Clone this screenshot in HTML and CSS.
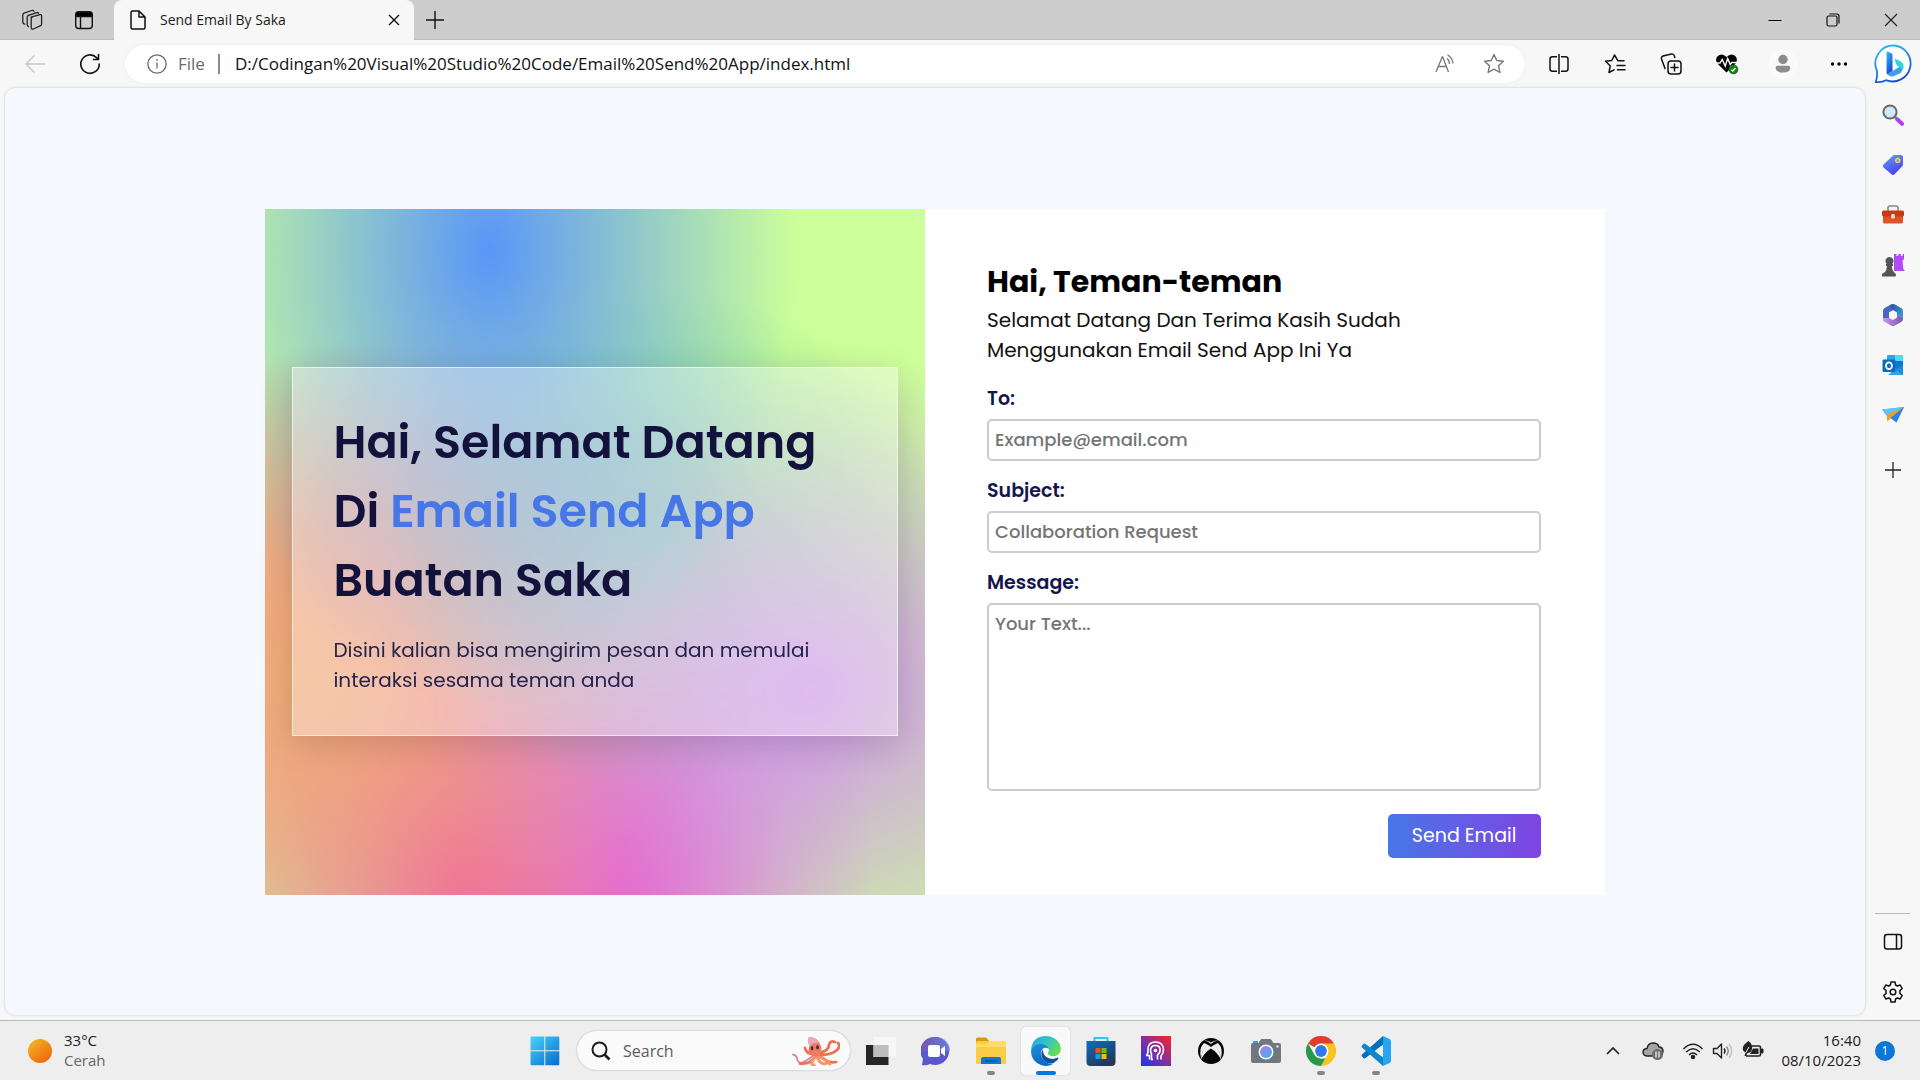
FILE: index.html
```html
<!DOCTYPE html>
<html lang="id">
<head>
<meta charset="utf-8">
<meta name="viewport" content="width=device-width, initial-scale=1">
<title>Send Email By Saka</title>
<link rel="stylesheet" href="styles.css">
</head>
<body>
<div class="titlebar">
  <button class="title-btn" aria-label="Workspaces"><svg width="22" height="22" viewBox="0 0 22 22" fill="none" stroke="#222" stroke-width="1.3" stroke-linejoin="round" stroke-linecap="round"><path d="M10 8.2 19 5.6q1.6-.3 1.6 1.300v8.300q0 1-1 1.400L12.400 20q-1.600.5-2.200-1V9.800q0-1.100 1-1.600zM7.500 17.500q-1.300-.3-1.300-1.700V8q0-1.200 1.200-1.700l8.200-2.700q1.400-.4 2 .7M3.800 15.200q-2-.4-2-2V6q0-1.300 1.200-1.800l7.800-2.700q1.700-.5 2.200.9"/></svg></button>
  <button class="title-btn" aria-label="Tab actions"><svg width="20" height="20" viewBox="0 0 20 20" fill="none" stroke="#111" stroke-width="1.400"><rect x="1.700" y="2" width="16.600" height="16.500" rx="3"/><path d="M6.500 6v12"/><path d="M2 6.500V4.500Q2 2 4.500 2h11Q18 2 18 4.500v2z" fill="#000"/></svg></button>
  <div class="tab">
    <svg width="18" height="22" viewBox="0 0 18 22" fill="none" stroke="#111" stroke-width="1.500" stroke-linejoin="round"><path d="M3.500 2H10l6 6v10.500q0 1.500-1.500 1.500h-11Q2 20 2 18.500v-15Q2 2 3.500 2zM10 2v6h6"/></svg>
    <span class="tab-title">Send Email By Saka</span>
    <button class="tab-close" aria-label="Close tab"><svg width="12" height="12" viewBox="0 0 12 12" stroke="#111" stroke-width="1.400"><path d="m1 1 10 10M11 1 1 11"/></svg></button>
  </div>
  <button class="new-tab" aria-label="New tab"><svg width="18" height="18" viewBox="0 0 18 18" stroke="#111" stroke-width="1.400"><path d="M9 0v18M0 9h18"/></svg></button>
  <div class="window-controls">
    <button aria-label="Minimize"><svg width="14" height="14" viewBox="0 0 14 14" stroke="#000"><path d="M.5 7.500h13"/></svg></button>
    <button aria-label="Restore"><svg width="14" height="14" viewBox="0 0 14 14" fill="none" stroke="#111" stroke-width="1.200"><rect x="1" y="3" width="10" height="10" rx="1.500"/><path d="M3.500 1h7.300q2.200 0 2.200 2.200v7.300"/></svg></button>
    <button aria-label="Close"><svg width="14" height="14" viewBox="0 0 14 14" stroke="#222" stroke-width="1.200"><path d="m1 1 12 12M13 1 1 13"/></svg></button>
  </div>
</div>

<div class="toolbar">
  <button class="tool" aria-label="Back"><svg width="22" height="20" viewBox="0 0 22 20" fill="none" stroke="#c8c8c8" stroke-width="1.400"><path d="M21 10H2M10.500 1.500 2 10l8.500 8.500"/></svg></button>
  <button class="tool narrow" aria-label="Refresh"><svg width="22" height="22" viewBox="0 0 22 22" fill="none" stroke="#111" stroke-width="1.600" stroke-linecap="round" stroke-linejoin="round"><path d="M20.200 11a9.200 9.200 0 1 1-2.500-6.200L19.500 6.500M19.500 1.500v5h-5"/></svg></button>
  <div class="address">
    <svg width="20" height="20" viewBox="0 0 20 20" fill="none" stroke="#6b6b6b" stroke-width="1.300"><circle cx="10" cy="10" r="9.200"/><path d="M10 8.500v6"/><path d="M10 5.300v1.500" stroke-width="1.600"/></svg>
    <span class="scheme">File</span>
    <input class="url" type="text" aria-label="Address" value="D:/Codingan%20Visual%20Studio%20Code/Email%20Send%20App/index.html">
    <button class="addr-btn" aria-label="Read aloud"><svg width="20" height="20" viewBox="0 0 20 20" fill="none" stroke="#777" stroke-width="1.300"><path d="M1 18 7.200 3h.5l5.800 15M3.200 12.500h8.300M12 4.500q2.700 2 2.500 5.500M12.500.8q5 3.200 5.500 8.700"/></svg></button>
    <button class="addr-btn" aria-label="Add to favorites"><svg width="22" height="22" viewBox="0 0 22 22" fill="none" stroke="#777" stroke-width="1.400" stroke-linejoin="round"><path d="m11 1.500 2.800 6 6.600.8-4.900 4.500 1.400 6.700L11 16.200l-5.900 3.300 1.400-6.700L1.600 8.300l6.600-.8z"/></svg></button>
  </div>
  <button class="tool" aria-label="Split screen"><svg width="20" height="20" viewBox="0 0 20 20" fill="none" stroke="#111" stroke-width="1.500"><path d="M8 2.700H3.500Q1 2.700 1 5.200v9.600q0 2.500 2.500 2.500H8M12 2.700h4.500Q19 2.700 19 5.200v9.600q0 2.500-2.500 2.500H12M10 0v20"/></svg></button>
  <button class="tool" aria-label="Favorites"><svg width="22" height="20" viewBox="0 0 22 20" fill="none" stroke="#111" stroke-width="1.500" stroke-linejoin="round" stroke-linecap="round"><path d="M20 6.700h-6.200L10.500 1 7.800 6.500 1.500 7.300l4.700 4.500L5 18.500l5-2.600M13 11.500h8M13.500 15.800H21"/></svg></button>
  <button class="tool" aria-label="Collections"><svg width="22" height="22" viewBox="0 0 22 22" fill="none" stroke="#111" stroke-width="1.500" stroke-linecap="round"><rect x="8" y="8" width="13" height="13" rx="3"/><path d="M14.500 11v7M11 14.500h7M5 15.500 1.500 6Q1 3.800 3 3l8.500-2q2.300-.3 3 2l.3 1.500"/></svg></button>
  <button class="tool" aria-label="Browser essentials"><svg width="24" height="24" viewBox="0 0 24 24"><path d="M11.500 20.500 2.800 12Q-.5 8 2.500 4.300q4.500-4 9 .7 4.500-4.700 9-.7 3 3.700-.3 7.700z" fill="#050505"/><path d="M0 11h5l2.200-3.500 3 6.500 2.500-7.500 2.500 6 1.500-2h5.500" fill="none" stroke="#f7f7f7" stroke-width="1.400"/><circle cx="18.500" cy="17.500" r="4.800" fill="#17801c"/><path d="m16.500 17.700 1.300 1.300 2.700-3" fill="none" stroke="#fff" stroke-width="1.300"/></svg></button>
  <button class="tool" aria-label="Profile"><svg width="28" height="28" viewBox="0 0 28 28" fill="#8c8c8c"><circle cx="14" cy="14" r="13.500" fill="#fafafa" stroke="#fff"/><circle cx="14" cy="9.500" r="4.700"/><path d="M8.500 15.800h11q1.800 0 1.800 1.800 0 5-7.300 5t-7.300-5q0-1.800 1.800-1.800z"/></svg></button>
  <button class="tool" aria-label="Settings and more"><svg width="18" height="6" viewBox="0 0 18 6"><circle cx="2.500" cy="3" r="1.700"/><circle cx="9" cy="3" r="1.700"/><circle cx="15.500" cy="3" r="1.700"/></svg></button>
  <button class="bing" aria-label="Bing Chat"><svg width="40" height="40" viewBox="0 0 40 40"><defs><linearGradient id="bo" x2=".4" y2="1"><stop stop-color="#32c8f4"/><stop offset="1" stop-color="#1a4fd0"/></linearGradient><linearGradient id="bi" x2=".5" y2="1"><stop stop-color="#38bdf8"/><stop offset="1" stop-color="#1747d8"/></linearGradient></defs><path d="M20 1.500A18 18 0 1 1 12 36.200Q8 38.500 1.800 38 3.500 33.500 3 27A18 18 0 0 1 20 1.500z" fill="#fff" stroke="url(#bo)" stroke-width="1.800"/><path d="m13.500 7.500 4 1.800q1 .5 1 1.600v16l-5 3.600q-1-.8-1-2.300V8q0-.7 1-.5z" fill="url(#bi)"/><path d="m20.500 14.500 5.500 2.500q4 2.200 3.700 6-.2 2-1.700 3.500 0-2.500-3-3.800l-1.700-.8q-2-2.500-2.800-7.400z" fill="#2ed4e0"/><path d="m18.500 27 7-4.200q2.800 1.200 2.500 4-.6 1.800-2.200 2.700L20 32q-3.500 1.300-6.500-1.500z" fill="#3f9fee"/></svg></button>
</div>

<div class="workspace">
  <main class="page">
    <section class="card">
      <div class="hero">
        <div class="glass">
          <h1 class="hero-title">Hai, Selamat Datang<br>Di <span class="accent">Email Send App</span><br>Buatan Saka</h1>
          <p class="hero-text">Disini kalian bisa mengirim pesan dan memulai<br>interaksi sesama teman anda</p>
        </div>
      </div>
      <form class="mail-form">
        <h2 class="form-title">Hai, Teman-teman</h2>
        <p class="form-text">Selamat Datang Dan Terima Kasih Sudah<br>Menggunakan Email Send App Ini Ya</p>
        <div class="field"><label for="to">To:</label><input id="to" type="email" placeholder="Example@email.com"></div>
        <div class="field"><label for="subject">Subject:</label><input id="subject" type="text" placeholder="Collaboration Request"></div>
        <div class="field"><label for="message">Message:</label><textarea id="message" placeholder="Your Text..."></textarea></div>
        <button class="send" type="button">Send Email</button>
      </form>
    </section>
  </main>
  <aside class="sidebar">
    <button aria-label="Search"><svg width="22" height="22" viewBox="0 0 22 22"><path d="m13 13 2.500 2.500" stroke="#777" stroke-width="3"/><path d="m15.500 15.500 4.500 4.300" stroke="#b43df0" stroke-width="4" stroke-linecap="round"/><circle cx="8" cy="8" r="6.600" fill="#cde9fb" stroke="#686868" stroke-width="2"/></svg></button>
    <button aria-label="Shopping"><svg width="22" height="22" viewBox="0 0 22 22"><defs><linearGradient id="tg" x2=".5" y2="1"><stop stop-color="#63a4f5"/><stop offset="1" stop-color="#4a3ff5"/></linearGradient></defs><path d="M12.500 1H19q2 0 2 2v7.500q0 1-1 2l-7.500 7.800q-1.500 1.400-3 0L1.500 13.500q-1.500-1.500 0-3L10.500 2q1-1 2-1z" fill="url(#tg)"/><circle cx="15.800" cy="6.500" r="2" fill="#7f8cf5" stroke="#ffd23c" stroke-width="1.500"/></svg></button>
    <button aria-label="Tools"><svg width="24" height="20" viewBox="0 0 24 20"><path d="M7 6V3q0-2 2-2h6q2 0 2 2v3" fill="none" stroke="#888" stroke-width="1.600"/><rect x="2" y="9" width="20" height="9.500" rx="1.500" fill="#de5426"/><rect x="1" y="5.500" width="22" height="6" rx="1.500" fill="#c23c12"/><rect x="10.200" y="9" width="3.600" height="4.500" rx="1" fill="#ddd"/></svg></button>
    <button aria-label="Games"><svg width="24" height="24" viewBox="0 0 24 24"><path d="M13 1h2.500v2h1.700V1h2.600v2h1.700V1H23v5l-1.500 2 .8 8 1.700 2H13z" fill="#b14af5"/><path d="M8.500 4a4 4 0 0 1 2.700 7H12v2h-1.200q.2 4 2 6l2 2v2.500H1V21l3-2q1.700-2 2-6H5v-2h.8A4 4 0 0 1 8.500 4z" fill="#555"/></svg></button>
    <button aria-label="Microsoft 365"><svg width="22" height="24" viewBox="0 0 22 24"><defs><linearGradient id="m1" x2="1" y2="1"><stop stop-color="#264a9e"/><stop offset="1" stop-color="#3fa4e8"/></linearGradient><linearGradient id="m2" x2="1"><stop stop-color="#c79bea"/><stop offset="1" stop-color="#7c52b4"/></linearGradient></defs><path d="M7.500 2.300 9.500 1.300q1.800-.8 3.500.2l6.500 3.700Q21 6.200 21 8v7.500L15 12V9.500L11 7 7.500 9z" fill="url(#m1)"/><path d="M7.500 2.300 2.300 5.300Q1 6.200 1 8v8q0 1.500 1.300 2.500L7 15V9l4-2z" fill="#4a66c0"/><path d="M1 15v1q0 2 1.500 2.800l6.500 3.700q2 1 4 0l6.500-3.800q1.500-1 1.500-2.700v-1L15 12v2.500L11 17l-4-2z" fill="url(#m2)"/></svg></button>
    <button aria-label="Outlook"><svg width="22" height="22" viewBox="0 0 22 22"><rect x="5" y="1" width="16" height="12" rx="1" fill="#28a8ea"/><path d="M13 1h8v6h-8z" fill="#50d9ff"/><path d="M5 7h16v5l-6 4z" fill="#0f78d4"/><path d="M5 21h15q1 0 1-1v-8.500L12 16l9 5z" fill="#14447d"/><path d="M6 21h14q1.300 0 .8-1L13 15z" fill="#28a8ea"/><path d="M13 15.500 21 11v9z" fill="#1490df"/><rect x=".5" y="5.500" width="13" height="12.500" rx="1.300" fill="#0f6cbd"/><ellipse cx="7" cy="11.700" rx="3" ry="3.400" fill="none" stroke="#fff" stroke-width="1.800"/></svg></button>
    <button aria-label="Drop"><svg width="22" height="20" viewBox="0 0 22 20"><path d="M0 4.500 22 2l-8 15-5-4-3.500 2.500-.8-5z" fill="#3897f0"/><path d="M0 4.500 22 2 5 10z" fill="#5cc6ff"/><path d="m4.700 9.500 17.300-7L8.500 13l-3 3.500z" fill="#f0a01e"/><path d="M22 2 8.500 13l6 4.500z" fill="#2f7fe8"/></svg></button>
    <button class="add-app" aria-label="Customize"><svg width="16" height="16" viewBox="0 0 16 16" stroke="#222" stroke-width="1.300"><path d="M8 0v16M0 8h16"/></svg></button>
    <div class="sidebar-foot">
      <button aria-label="Sidebar layout"><svg width="20" height="18" viewBox="0 0 20 18" fill="none" stroke="#111" stroke-width="1.500"><rect x="1.500" y="1.500" width="17" height="14.500" rx="2.500"/><path d="M13.500 1.500V16"/></svg></button>
      <button aria-label="Settings"><svg width="22" height="22" viewBox="0 0 22 22" fill="none" stroke="#111" stroke-width="1.500" stroke-linejoin="round"><path d="M9 1h4l.6 3 1.700 1 2.900-1 2 3.500L18 9.500v3l2.200 2-2 3.500-2.900-1-1.700 1-.6 3H9l-.6-3-1.700-1-2.900 1-2-3.500 2.200-2v-3l-2.200-2 2-3.500 2.900 1 1.700-1z"/><circle cx="11" cy="11" r="2.800"/></svg></button>
    </div>
  </aside>
</div>

<footer class="taskbar">
  <div class="weather">
    <svg width="24" height="24" viewBox="0 0 24 24"><defs><linearGradient id="sun" x2=".8" y2="1"><stop stop-color="#f0bd2c"/><stop offset="1" stop-color="#f16408"/></linearGradient></defs><circle cx="12" cy="12" r="12" fill="url(#sun)"/></svg>
    <div class="lines"><div>33°C</div><div class="muted">Cerah</div></div>
  </div>
  <div class="apps">
    <button class="app" aria-label="Start"><svg width="30" height="30" viewBox="0 0 30 30"><defs><linearGradient id="win" gradientUnits="userSpaceOnUse" x1="0" y1="0" x2="26" y2="30"><stop stop-color="#4cd4fd"/><stop offset="1" stop-color="#0670d0"/></linearGradient></defs><path d="M1.500.500H14.300V14.300H.5V1.500Q.5.500 1.500.500zM15.300.5h13q1 0 1 1v12.800h-14zM.5 15.300h13.800v14H1.500q-1 0-1-1zM15.300 15.300h14v13q0 1-1 1h-13z" fill="url(#win)"/></svg></button>
    <label class="search">
      <svg width="20" height="20" viewBox="0 0 20 20" fill="none" stroke="#1c1c1c" stroke-width="2"><circle cx="8.500" cy="8.500" r="7"/><path d="m13.500 13.500 5 5" stroke-width="2.600"/></svg>
      <input type="text" aria-label="Search" placeholder="Search">
      <svg width="48" height="30" viewBox="0 0 48 30" fill="none" stroke-linecap="round"><path d="M22 19Q15 25 9 27 5 26 5 22 4 19 1 18.500" stroke="#d98a9a" stroke-width="1.800"/><path d="M24 20Q18 29 8 27.500M27 17Q37 15 37 9 38 4 43 6M28 19Q40 19 45 14 49 10 46 7M28 20Q36 28 44 26M22 18Q14 18 13 12" stroke="#e8744f" stroke-width="2.800"/><path d="M23 21Q17 29 22 29M26 21Q32 21 38 28M25 21Q29 30 35 27" stroke="#f59468" stroke-width="3"/><path d="M17 1Q25 1 28 8 31 14 28 19 22 23 18 18 15 14 18 9 15 5 17 1z" fill="#ef7c5e"/><path d="M17 1q7 .5 9.500 6-4.500-1-8.500 3-4-4-1-9z" fill="#e9a9bd"/><path d="M20 11.500v1.500M25.500 10.500V12" stroke="#2d3159" stroke-width="2.500"/></svg>
    </label>
    <button class="app" aria-label="Task view"><svg width="30" height="28" viewBox="0 0 30 28"><path d="M0 8h22.500v20H0z" fill="#262624"/><path d="M7.500 0H30v20H7.500z" fill="#f7f7f7" opacity=".95"/><path d="M7.500 8h15v12h-15z" fill="#bdbdbb"/></svg></button>
    <button class="app" aria-label="Chat"><svg width="30" height="30" viewBox="0 0 30 30"><defs><linearGradient id="ch" x2="1" y2="0"><stop stop-color="#7a5aa6"/><stop offset="1" stop-color="#6d86e0"/></linearGradient></defs><path d="M15 1a14 14 0 1 1-6 27Q5 30 1 29l1-6A14 14 0 0 1 15 1z" fill="#5a59cc"/><path d="M15 1a14 14 0 0 1 14 14H1A14 14 0 0 1 15 1z" fill="url(#ch)" opacity=".75"/><rect x="7" y="9" width="12" height="12" rx="2" fill="#fff"/><path d="m20 13 4-3v10l-4-3z" fill="#fff"/></svg></button>
    <button class="app running" aria-label="File Explorer"><svg width="30" height="28" viewBox="0 0 30 28"><path d="M0 2q0-1.500 1.500-1.500H9q1 0 2 1L13 4v6H0z" fill="#d99a08"/><rect y="4" width="30" height="23" rx="1.500" fill="#fbcc45"/><path d="M0 7.500h11L14 4h14.500Q30 4 30 5.500V10H0z" fill="#ffdc69"/><path d="M5 27v-5q0-2 2-2h16q2 0 2 2v5z" fill="#1177cf"/><path d="M9 24h12" stroke="#0b4b91" stroke-width="1.500"/></svg></button>
    <button class="app active" aria-label="Microsoft Edge"><svg width="30" height="30" viewBox="0 0 30 30"><defs><linearGradient id="e1" x2="1" y2=".5"><stop stop-color="#24a3dc"/><stop offset=".55" stop-color="#35c4c4"/><stop offset="1" stop-color="#63dd54"/></linearGradient><linearGradient id="e2" y2="1" x2=".4"><stop stop-color="#1f8fe0"/><stop offset="1" stop-color="#0a69c0"/></linearGradient></defs><path d="M0 14.500Q1 0 15 0q9 0 13.500 7.500Q32 15 26.500 19q-4.500 2.500-8.500 0-2-1.500-.5-3 1.200-3-1-5Q9 6 0 14.500z" fill="url(#e1)"/><path d="M0 15Q3 7.500 10 8q6 .5 8 5-4-2.500-6.500 0-3.500 4 0 9.500Q15.500 29 23 27.500 17 31.500 10 29 0 25 0 15z" fill="url(#e2)"/><path d="M11.500 13q-3.500 8 3 13 6 4 12-2 1.500-2 .5-2.500-7.500 3.500-13-1.500-2-2.500-2.500-7z" fill="#11529e"/></svg></button>
    <button class="app" aria-label="Microsoft Store"><svg width="30" height="30" viewBox="0 0 30 30"><defs><linearGradient id="st" x2=".6" y2="1"><stop stop-color="#0872bf"/><stop offset="1" stop-color="#243656"/></linearGradient></defs><path d="M8.500 6V2h13v4" fill="none" stroke="#38c4ef" stroke-width="2"/><path d="M.5 5h29v21q0 4-4 4h-21q-4 0-4-4z" fill="url(#st)"/><path d="M9.500 12h5v5h-5z" fill="#f25022"/><path d="M15.500 12h5v5h-5z" fill="#7fba00"/><path d="M9.500 18h5v5h-5z" fill="#00a4ef"/><path d="M15.500 18h5v5h-5z" fill="#ffb900"/></svg></button>
    <button class="app" aria-label="Head assistant"><svg width="30" height="30" viewBox="0 0 30 30"><defs><linearGradient id="hd" x1="0" y1="1" x2="1" y2="0"><stop stop-color="#1a36f0"/><stop offset=".5" stop-color="#85309c"/><stop offset="1" stop-color="#fd2323"/></linearGradient></defs><path d="M0 0h30v30H0z" fill="url(#hd)"/><g fill="none" stroke="#fff" stroke-width="1.600"><path d="M8.500 23.500v-4H5.800L7 16v-2.500Q7 6 14.500 6t8 7.500q0 4-2.500 6.500v3.500"/><path d="M12 23.500h-1.500V18q-1-1.500-1-4Q10 9.500 14.500 9.500t4.700 4.500q0 3-2.700 5v4.500"/></g><circle cx="14.500" cy="14.500" r="1.800" fill="#fff"/></svg></button>
    <button class="app" aria-label="Xbox"><svg width="28" height="28" viewBox="0 0 28 28"><circle cx="14" cy="14" r="13" fill="#050505"/><path d="M7 3.800Q10 3 14 5.500 18 3 21 3.800q-3-.5-7 3.200-4-3.700-7-3.200zM10.500 8Q4.500 14 4.200 22 1.500 12 6.500 6.500 8 5.500 10.500 8zM17.500 8q6 6 6.300 14Q26.500 12 21.500 6.500 20 5.500 17.500 8z" fill="#eee"/><path d="M10 7.500Q4.500 14 4 22.500 8 15 14 11.500q6 3.500 10 11Q23.500 14 18 7.500q-2 .8-4 2.500-2-1.700-4-2.500z" fill="#eee"/></svg></button>
    <button class="app" aria-label="Camera"><svg width="30" height="24" viewBox="0 0 30 24"><defs><linearGradient id="cm" x2=".5" y2="1"><stop stop-color="#b879e6"/><stop offset="1" stop-color="#47aaf0"/></linearGradient></defs><path d="M2 3q0-1 1-1h3q1 0 1 1v2H2z" fill="#2ba4e2"/><path d="M9.500 1q.5-1 1.500-1h8q1 0 1.500 1l2 3H28q2 0 2 2v16q0 2-2 2H2q-2 0-2-2V6q0-2 2-2h5.500z" fill="#70777e"/><circle cx="15" cy="13" r="7.500" fill="#fff"/><circle cx="15" cy="13" r="6" fill="url(#cm)"/><circle cx="26.500" cy="7.500" r="1.200" fill="#ddd"/></svg></button>
    <button class="app running" aria-label="Google Chrome"><svg width="30" height="30" viewBox="0 0 30 30"><path d="M15 15 2 7.500A15 15 0 0 1 28 7.500z" fill="#e33b2e"/><path d="M15 15v-7.500h13A15 15 0 0 1 15 30l6.500-11.200z" fill="#fcc31e"/><path d="M2 7.500 8.500 18.700 15 22.500h4.300L15 30A15 15 0 0 1 2 7.500z" fill="#279847"/><circle cx="15" cy="15" r="7.500" fill="#fff"/><circle cx="15" cy="15" r="5.900" fill="#3279ec"/></svg></button>
    <button class="app running" aria-label="Visual Studio Code"><svg width="30" height="30" viewBox="0 0 30 30"><path d="M22 0 1 18.500q-1 1 0 2L2.500 22q1 .8 2 0L22 8.500z" fill="#0070b8"/><path d="M22 30 1 11.500q-1-1 0-2L2.500 8q1-.8 2 0L22 21.500z" fill="#0a87cf"/><path d="M22 0 28.500 3Q30 3.700 30 5.500v19q0 1.800-1.500 2.500L22 30z" fill="#27a5f0"/></svg></button>
  </div>
  <div class="tray">
    <button class="tray-icon wide" aria-label="Hidden icons"><svg width="14" height="10" viewBox="0 0 14 10" fill="none" stroke="#222" stroke-width="1.700"><path d="m1 8 6-6 6 6"/></svg></button>
    <button class="tray-icon wide" aria-label="OneDrive"><svg width="22" height="20" viewBox="0 0 22 20"><path d="M5 15Q1 14.500 1 11q0-3 4-3.500Q6 2 11 2t6 4q4 0 4 4.500 0 2-2 3L17 15z" fill="#a4a4a4" stroke="#222" stroke-width="1.400"/><circle cx="15.500" cy="13.500" r="5.500" fill="#6c6c6c"/><path d="M14 10.500v6M17 10.500v6" stroke="#fff" stroke-width="1.200"/></svg></button>
    <button class="tray-icon" aria-label="Wi-Fi"><svg width="22" height="18" viewBox="0 0 22 18" fill="none" stroke="#222" stroke-width="1.500"><path d="M1.500 7q9.500-9.500 19 0M4.200 10q6.800-6.500 13.600 0M7 13q4-4 8 0"/><circle cx="11" cy="15" r="1.500" fill="#222"/></svg></button>
    <button class="tray-icon" aria-label="Volume"><svg width="22" height="18" viewBox="0 0 22 18" fill="none" stroke="#222" stroke-width="1.400" stroke-linejoin="round"><path d="M1.500 6.500H5L9.500 2v14L5 11.500H1.500z"/><path d="M12 6.500q2 2.500 0 5"/><path d="M14.500 4.500q3.500 4.500 0 9" stroke="#888"/><path d="M17 2q5.500 7 0 14" stroke="#c0c0c0"/></svg></button>
    <button class="tray-icon" aria-label="Battery"><svg width="22" height="20" viewBox="0 0 22 20"><path d="M10 5h7q1.500 0 1.500 1.500v7q0 1.500-1.500 1.500H4" fill="none" stroke="#222" stroke-width="1.600"/><path d="M11 7.500h5.500v5.500H8z" fill="#222"/><path d="M19.500 8h1.500v4h-1.500z" stroke="#222" fill="#222"/><path d="M6.500 0Q11 3.500 10 8q-1 4-4.500 4L4 15H2.500l1-3.500Q0 10 1 6 1.500 3.500 6.500 0z" fill="#222"/><path d="M3.500 12 7 6" stroke="#eee" stroke-width="1"/></svg></button>
    <div class="clock lines"><div>16:40</div><div>08/10/2023</div></div>
    <button class="badge" aria-label="1 notification">1</button>
  </div>
</footer>
</body>
</html>
```
FILE: styles.css
```css
* {
  box-sizing: border-box;
}

body {
  margin: 0;
  min-height: 100vh;
  display: flex;
  flex-direction: column;
  background: #f7f7f7;
  color: #1b1b1b;
  font-family: "Segoe UI", "Open Sans", "Noto Sans", sans-serif;
  font-size: 14px;
}

button {
  display: flex;
  align-items: center;
  justify-content: center;
  padding: 0;
  border: 0;
  background: none;
  color: inherit;
  font: inherit;
}

svg {
  flex: none;
}

h1,
h2,
p {
  margin: 0;
}

/* Window title bar */
.titlebar {
  display: flex;
  align-items: center;
  height: 40px;
  padding-left: 6px;
  background: #cdcdcd;
  box-shadow: inset 0 -1px #bebebe;
}

.title-btn {
  width: 52px;
  height: 40px;
}

.tab {
  display: flex;
  align-items: center;
  gap: 13px;
  width: 300px;
  height: 40px;
  margin-left: 4px;
  padding: 0 10px 0 15px;
  border-radius: 8px 8px 0 0;
  background: #f7f7f7;
}

.tab-title {
  flex: 1;
  padding-bottom: 2px;
}

.tab-close {
  width: 20px;
  height: 20px;
}

.new-tab {
  width: 42px;
  height: 40px;
}

.window-controls {
  display: flex;
  margin-left: auto;
}

.window-controls button {
  width: 58px;
  height: 40px;
}

/* Toolbar */
.toolbar {
  display: flex;
  align-items: center;
  height: 48px;
  padding-left: 7px;
}

.tool {
  width: 56px;
  height: 40px;
}

.tool.narrow {
  width: 54px;
}

.address {
  display: flex;
  flex: 1;
  align-items: center;
  height: 38px;
  margin: 0 6px 0 8px;
  padding: 0 7px 0 22px;
  border-radius: 19px;
  background: #fff;
  box-shadow: 0 0 3px #e6e6e6;
  font-size: 17px;
}

.scheme {
  margin-left: 11px;
  padding-right: 13px;
  border-right: 2px solid #8a8a8a;
  color: #6b6b6b;
  line-height: 20px;
}

.url {
  flex: 1;
  min-width: 0;
  padding: 0 0 2px 15px;
  border: 0;
  outline: 0;
  background: none;
  color: #111;
  font: inherit;
}

.addr-btn {
  width: 49px;
  height: 38px;
}

.bing {
  width: 53px;
  height: 48px;
}

/* Page and sidebar */
.workspace {
  display: flex;
  flex: 1;
}

.page {
  display: flex;
  flex: 1;
  align-items: center;
  justify-content: center;
  margin: 0 0 5px 5px;
  border-radius: 10px;
  background: #f5f8ff;
  box-shadow: 0 0 3px #c4c4c4;
  font-family: "Poppins", "Inter", sans-serif;
}

.sidebar {
  display: flex;
  flex-direction: column;
  width: 55px;
  padding-top: 2px;
}

.sidebar button {
  width: 55px;
  height: 50px;
}

.sidebar .add-app {
  height: 60px;
}

.sidebar-foot {
  margin: auto 0 3px;
}

.sidebar-foot::before {
  content: "";
  display: block;
  height: 1px;
  margin: 0 10px 3px;
  background: #b8b8b8;
}

.card {
  display: grid;
  grid-template-columns: 33fr 34fr;
  width: 72%;
  background: #fff;
}

.hero {
  display: flex;
  align-items: center;
  padding: 0 27px;
  background-color: #ccff99;
  background-image:
    radial-gradient(at 34% 6%, #5a96f8 0, transparent 50%),
    radial-gradient(at 83% 70%, #cf97ea 0, transparent 50%),
    radial-gradient(at 60% 48%, #70d693 0, transparent 50%),
    radial-gradient(at 4% 68%, #f1ac78 0, transparent 50%),
    radial-gradient(at 30% 98%, #ef649f 0, transparent 50%),
    radial-gradient(at 54% 94%, #e955f0 0, transparent 50%),
    radial-gradient(at 24% 60%, #ff6f80 0, transparent 50%);
}

.glass {
  flex: 1;
  padding: 40px;
  border: 1px solid rgba(255, 255, 255, 0.6);
  background: rgba(255, 255, 255, 0.35);
  box-shadow: 0 8px 32px rgba(0, 0, 0, 0.15);
  backdrop-filter: blur(4px);
}

.hero-title {
  color: #12123c;
  font-size: 46px;
  font-weight: 600;
  line-height: 69px;
}

.accent {
  color: #4776e6;
}

.hero-text {
  margin-top: 20px;
  color: #23234c;
  font-size: 20px;
  line-height: 30px;
}

.mail-form {
  padding: 50px 64px 37px 62px;
}

.form-title {
  color: #000;
  font-size: 30px;
  font-weight: 700;
  line-height: 45px;
}

.form-text {
  margin: 1px 0 20px;
  color: #111;
  font-size: 20px;
  line-height: 30px;
}

.field {
  display: flex;
  flex-direction: column;
  gap: 7px;
  margin-bottom: 16px;
}

.field label {
  color: #16164f;
  font-size: 19px;
  font-weight: 600;
  line-height: 27px;
}

.field input,
.field textarea {
  width: 100%;
  height: 42px;
  padding: 5px 6px;
  border: 2px solid #ccc;
  border-radius: 5px;
  outline: 0;
  background: #fff;
  font-family: inherit;
  font-size: 18px;
  font-weight: 500;
  line-height: 27px;
  resize: none;
}

.field textarea {
  height: 188px;
}

.field ::placeholder {
  color: #757575;
}

.send {
  width: 153px;
  height: 44px;
  margin: 23px 0 0 auto;
  border-radius: 5px;
  background: linear-gradient(to right, #4776e6, #8044e4);
  color: #fff;
  font-size: 19px;
}

/* Taskbar */
.taskbar {
  display: grid;
  grid-template-columns: 1fr auto 1fr;
  align-items: center;
  height: 60px;
  border-top: 1px solid #b9b9b9;
  background: #eee;
  line-height: 20px;
}

.lines {
  padding-bottom: 2px;
  font-size: 15px;
}

.weather {
  display: flex;
  align-items: center;
  gap: 12px;
  padding-left: 28px;
}

.muted {
  color: #666;
}

.apps {
  display: flex;
  align-items: center;
}

.app {
  position: relative;
  width: 55px;
  height: 48px;
}

.app.active {
  width: 49px;
  margin: 0 3px;
  border-radius: 5px;
  background: #f9f9f9;
  box-shadow: 0 0 2px #ccc;
}

.app.running::after,
.app.active::after {
  content: "";
  position: absolute;
  bottom: 0;
  width: 8px;
  height: 4px;
  border-radius: 2px;
  background: #858585;
}

.app.active::after {
  width: 20px;
  background: #0a78d4;
}

.search {
  display: flex;
  align-items: center;
  gap: 12px;
  width: 273px;
  height: 39px;
  margin: 0 3px 0 5px;
  padding: 0 10px 0 14px;
  border-radius: 20px;
  background: #fafafa;
  box-shadow: 0 0 2px #aaa;
}

.search input {
  flex: 1;
  min-width: 0;
  padding: 0;
  border: 0;
  outline: 0;
  background: none;
  font: inherit;
  font-size: 16px;
}

.search ::placeholder {
  color: #5c5c5c;
}

.tray {
  display: flex;
  align-items: center;
  justify-content: flex-end;
  padding-right: 25px;
}

.tray-icon {
  width: 30px;
  height: 40px;
}

.tray-icon.wide {
  width: 40px;
}

.tray-icon.wide + .tray-icon:not(.wide) {
  margin-left: 5px;
}

.clock {
  width: 93px;
  text-align: right;
}

.badge {
  width: 20px;
  height: 20px;
  margin-left: 14px;
  border-radius: 50%;
  background: #0a78d4;
  color: #fff;
  font-size: 12px;
}
```
